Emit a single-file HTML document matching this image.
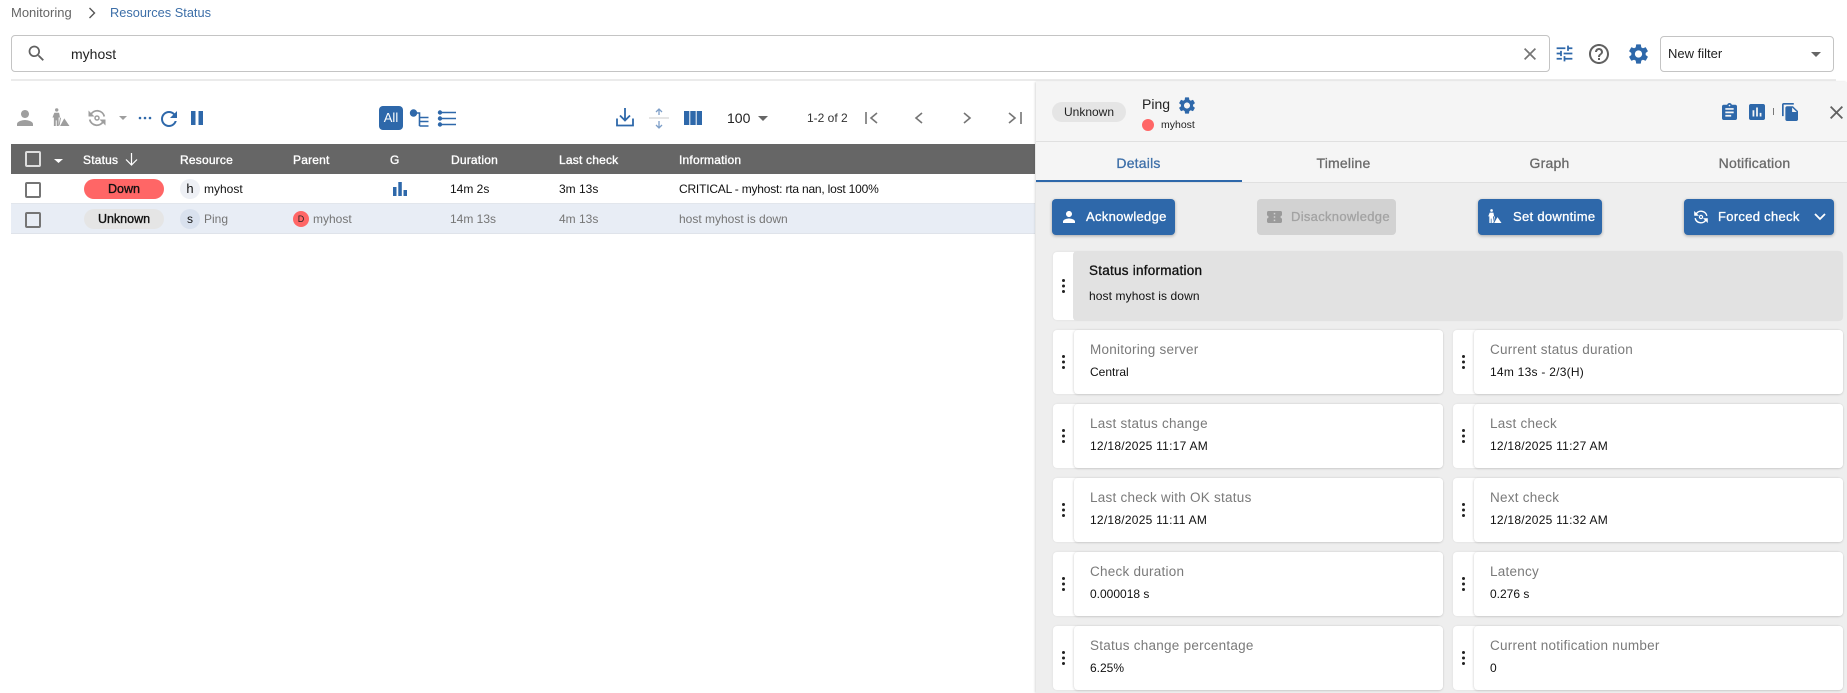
<!DOCTYPE html>
<html lang="en"><head><meta charset="utf-8"><title>Resources Status</title>
<style>
html,body{margin:0;padding:0;background:#fff;width:1847px;height:693px;overflow:hidden}
body{position:relative;font-family:"Liberation Sans",sans-serif;color:#111}
.a,.t{position:absolute}
.t{white-space:nowrap;line-height:20px;font-size:12px}
svg{position:absolute;display:block;overflow:visible}
.hd{color:#fff;font-size:12px;letter-spacing:.2px;-webkit-text-stroke:.35px #fff;top:150px}
.r1{top:179px;color:#111}
.r2{top:209px;color:#757575}
.cb{position:absolute;left:25px;width:12px;height:12px;border:2px solid #757575;border-radius:2px;background:#fff}
.chip{position:absolute;left:84px;width:80px;height:20px;border-radius:10px;text-align:center;line-height:20px;font-size:12.5px;-webkit-text-stroke:.35px #111;color:#111}
.tab{position:absolute;top:153px;width:205px;text-align:center;font-size:14px;letter-spacing:.2px;line-height:20px;-webkit-text-stroke:.3px #6a6a6a;color:#6a6a6a}
.btn{position:absolute;top:199px;height:36px;border-radius:4px;background:#2e68aa;box-shadow:0 1px 3px rgba(0,0,0,.3)}
.btxt{color:#fff;font-size:13px;letter-spacing:.3px;-webkit-text-stroke:.3px #fff;top:207px}
.card{position:absolute;width:390px;height:64px;background:#fff;border-radius:4px;box-shadow:0 0 2px rgba(0,0,0,.08)}
.in{position:absolute;left:21px;top:0;right:0;bottom:0;border-radius:4px;box-shadow:-1px 0 2px rgba(0,0,0,.08),0 1px 2px rgba(0,0,0,.09);background:#fff}
.lb{position:absolute;left:37px;top:10px;line-height:20px;font-size:13.5px;letter-spacing:.25px;color:#7a7a7a;white-space:nowrap}
.vl{position:absolute;left:37px;top:32px;line-height:20px;font-size:12px;color:#111;white-space:nowrap}
.vl.d{letter-spacing:.25px}
.dots{position:absolute;left:9px;top:25px;width:3px;height:3px;border-radius:50%;background:#222;box-shadow:0 5.5px 0 #222,0 11px 0 #222}
</style></head><body>
<svg width="0" height="0" style="position:absolute"><defs>
<symbol id="person" viewBox="4 4 16 16"><path d="M12 12c2.21 0 4-1.79 4-4s-1.79-4-4-4-4 1.79-4 4 1.79 4 4 4zm0 2c-2.67 0-8 1.34-8 4v2h16v-2c0-2.66-5.33-4-8-4z"/></symbol>
<symbol id="dt" viewBox="0 0 19 19"><circle cx="5.5" cy="2" r="1.8"/><path d="M3 5h5l1 5H7.500v9H5.500v-6H4.500v6H2.500v-9L1 10zM9 10l1 .5-1.500 8H7.500z"/><path d="M9 19l4.500-8 5.500 8z"/></symbol>
<symbol id="sync" viewBox="0 0 20 20"><path d="M3.800 6.500A7.300 7.300 0 0 1 17.300 8.500M16.200 13.500A7.300 7.300 0 0 1 2.700 11.500" fill="none" stroke="currentColor" stroke-width="1.800"/><path d="M1.500 2.500v6h6zM18.500 17.500v-6h-6z" fill="currentColor"/><circle cx="10" cy="10" r="2" fill="none" stroke="currentColor" stroke-width="1.500"/></symbol>
<symbol id="gear" viewBox="2.500 2 19 20"><path d="M19.140 12.940c.04-.3.06-.61.06-.94 0-.32-.02-.64-.07-.94l2.030-1.580c.18-.14.23-.41.12-.61l-1.920-3.320c-.12-.22-.37-.29-.59-.22l-2.390.96c-.5-.38-1.030-.7-1.620-.94l-.36-2.540c-.04-.24-.24-.41-.48-.41h-3.840c-.24 0-.43.17-.47.41l-.36 2.540c-.59.24-1.130.57-1.620.94l-2.390-.96c-.22-.08-.47 0-.59.22L2.740 8.870c-.12.21-.08.47.12.61l2.030 1.580c-.05.3-.09.63-.09.94s.02.64.07.94l-2.030 1.580c-.18.14-.23.41-.12.61l1.920 3.320c.12.22.37.29.59.22l2.390-.96c.5.38 1.030.7 1.620.94l.36 2.540c.05.24.24.41.48.41h3.840c.24 0 .44-.17.47-.41l.36-2.540c.59-.24 1.130-.56 1.620-.94l2.390.96c.22.08.47 0 .59-.22l1.920-3.320c.12-.22.07-.47-.12-.61l-2.010-1.580zM12 15.600c-1.980 0-3.600-1.620-3.600-3.600s1.620-3.600 3.600-3.600 3.600 1.620 3.600 3.600-1.620 3.600-3.600 3.600z"/></symbol>
<symbol id="close" viewBox="5 5 14 14"><path d="M19 6.410L17.590 5 12 10.590 6.410 5 5 6.410 10.590 12 5 17.590 6.410 19 12 13.410 17.590 19 19 17.590 13.410 12z"/></symbol>
</defs></svg>

<!-- breadcrumb -->
<div class="t" style="left:11px;top:3px;font-size:13px;color:#666">Monitoring</div>
<svg style="left:88px;top:7px" width="8" height="12" viewBox="0 0 8 12"><path d="M1.500 1l5 5-5 5" fill="none" stroke="#555" stroke-width="1.400"/></svg>
<div class="t" style="left:110px;top:3px;font-size:12.800px;color:#3d6fa8">Resources Status</div>

<!-- search -->
<div class="a" style="left:11px;top:35px;width:1537px;height:35px;border:1px solid #c4c4c4;border-radius:4px"></div>
<svg style="left:26px;top:43px" width="21" height="21" viewBox="0 0 24 24" fill="#616161"><path d="M15.500 14h-.79l-.28-.27C15.410 12.590 16 11.110 16 9.500 16 5.910 13.090 3 9.500 3S3 5.910 3 9.500 5.910 16 9.500 16c1.610 0 3.090-.59 4.230-1.570l.27.28v.79l5 4.990L20.490 19l-4.990-5zm-6 0C7.010 14 5 11.990 5 9.500S7.010 5 9.500 5 14 7.010 14 9.500 11.990 14 9.500 14z"/></svg>
<div class="t" style="left:71px;top:44px;font-size:14px;color:#222">myhost</div>
<svg style="left:1524px;top:48px" width="12" height="12" fill="#757575"><use href="#close"/></svg>
<svg style="left:1554px;top:43px" width="21" height="21" viewBox="0 0 24 24" fill="#2e68aa"><path d="M3 17v2h6v-2H3zM3 5v2h10V5H3zm10 16v-2h8v-2h-8v-2h-2v6h2zM7 9v2H3v2h4v2h2V9H7zm14 4v-2H11v2h10zm-6-4h2V7h4V5h-4V3h-2v6z"/></svg>
<svg style="left:1587px;top:42px" width="24" height="24" viewBox="0 0 24 24" fill="#616161"><path d="M11 18h2v-2h-2v2zm1-16C6.480 2 2 6.480 2 12s4.480 10 10 10 10-4.480 10-10S17.520 2 12 2zm0 18c-4.410 0-8-3.590-8-8s3.590-8 8-8 8 3.590 8 8-3.590 8-8 8zm0-14c-2.210 0-4 1.790-4 4h2c0-1.100.9-2 2-2s2 .9 2 2c0 2-3 1.750-3 5h2c0-2.250 3-2.500 3-5 0-2.210-1.790-4-4-4z"/></svg>
<svg style="left:1629px;top:44px" width="19" height="20" fill="#2e68aa"><use href="#gear"/></svg>
<div class="a" style="left:1660px;top:36px;width:172px;height:34px;border:1px solid #c4c4c4;border-radius:4px"></div>
<div class="t" style="left:1668px;top:44px;font-size:13px;color:#222">New filter</div>
<svg style="left:1811px;top:52px" width="10" height="5" fill="#666"><path d="M0 0h10L5 5z"/></svg>
<div class="a" style="left:11px;top:79px;width:1825px;height:2px;background:#ebebeb"></div>

<!-- toolbar -->
<svg style="left:17px;top:110px" width="16" height="16" fill="#9e9e9e"><use href="#person"/></svg>
<svg style="left:51px;top:108px" width="19" height="18" fill="#9e9e9e"><use href="#dt"/></svg>
<svg style="left:87px;top:108px;color:#9e9e9e" width="20" height="20"><use href="#sync"/></svg>
<svg style="left:119px;top:116px" width="8" height="4" fill="#9e9e9e"><path d="M0 0h8L4 4z"/></svg>
<svg style="left:138px;top:116px" width="14" height="4" fill="#2e68aa"><circle cx="2" cy="2" r="1.300"/><circle cx="7" cy="2" r="1.300"/><circle cx="12" cy="2" r="1.300"/></svg>
<svg style="left:161px;top:111px" width="16" height="16" viewBox="4 4 16 16" fill="#2e68aa"><path d="M17.650 6.350C16.200 4.900 14.210 4 12 4c-4.420 0-7.990 3.580-7.990 8s3.570 8 7.990 8c3.730 0 6.840-2.550 7.730-6h-2.080c-.82 2.330-3.040 4-5.650 4-3.310 0-6-2.690-6-6s2.690-6 6-6c1.660 0 3.140.69 4.220 1.780L13 11h7V4l-2.350 2.350z"/></svg>
<svg style="left:191px;top:111px" width="12" height="14" fill="#2e68aa"><path d="M0 0h4.500v14H0zM7.500 0H12v14H7.500z"/></svg>
<div class="a" style="left:379px;top:106px;width:24px;height:24px;border-radius:4px;background:#2e68aa;color:#fff;font-size:13px;text-align:center;line-height:24px">All</div>
<svg style="left:409px;top:108px" width="20" height="20" fill="none" stroke="#2e68aa" stroke-width="1.600"><circle cx="4.500" cy="5" r="3.700" fill="#2e68aa" stroke="none"/><path d="M4.500 5h6v13M10.500 9.500h9M10.500 13.500h9M10.500 18h9"/></svg>
<svg style="left:438px;top:110px" width="18" height="17" fill="#2e68aa" stroke="#2e68aa" stroke-width="1.600"><circle cx="2" cy="2.500" r="1.400"/><circle cx="2" cy="8.500" r="1.400"/><circle cx="2" cy="14.500" r="1.400"/><path d="M2 2.500h16M2 8.500h16M2 14.500h16"/></svg>
<svg style="left:616px;top:108px" width="18" height="19" fill="none" stroke="#2e68aa" stroke-width="1.800"><path d="M9 0v12M4 7.500L9 12.500 14 7.500M1 10.500v7h16v-7"/></svg>
<svg style="left:649px;top:108px" width="20" height="21" fill="none" stroke="#7e9fc8" stroke-width="1.300"><path d="M10 1v6M7 4l3-3 3 3M10 13v7M7 17l3 3 3-3"/><path d="M0 10h20" stroke="#d5d5d5"/></svg>
<svg style="left:684px;top:111px" width="18" height="14" fill="#2e68aa"><path d="M0 0h5.300v14H0zM6.300 0h5.400v14H6.300zM12.700 0H18v14h-5.300z"/></svg>
<div class="t" style="left:727px;top:108px;font-size:14px;color:#222">100</div>
<svg style="left:758px;top:116px" width="10" height="5" fill="#666"><path d="M0 0h10L5 5z"/></svg>
<div class="t" style="left:807px;top:108px;font-size:12px;color:#333">1-2 of 2</div>
<svg style="left:865px;top:112px" width="158" height="12" fill="none" stroke="#757575" stroke-width="1.600"><path d="M1 0v12M12 1L6 6l6 5M57 1l-6 5 6 5M99 1l6 5-6 5M144 1l6 5-6 5M156 0v12"/></svg>

<!-- table -->
<div class="a" style="left:11px;top:144px;width:1024px;height:30px;background:#666"></div>
<div class="cb" style="top:151px;background:transparent;border-color:#ddd"></div>
<svg style="left:54px;top:159px" width="9" height="4" fill="#fff"><path d="M0 0h9L4.500 4z"/></svg>
<div class="t hd" style="left:83px">Status</div>
<svg style="left:125px;top:152px" width="13" height="14" fill="none" stroke="#fff" stroke-width="1.200"><path d="M6.500 1v12M1 7.500l5.500 5.500L12 7.500"/></svg>
<div class="t hd" style="left:180px">Resource</div>
<div class="t hd" style="left:293px">Parent</div>
<div class="t hd" style="left:390px">G</div>
<div class="t hd" style="left:451px">Duration</div>
<div class="t hd" style="left:559px">Last check</div>
<div class="t hd" style="left:679px">Information</div>

<div class="a" style="left:11px;top:203px;width:1024px;height:1px;background:#e2e6ec"></div>
<div class="a" style="left:11px;top:204px;width:1024px;height:29px;background:#e8edf5;border-bottom:1px solid #dfe3ea"></div>
<div class="cb" style="top:182px"></div>
<div class="cb" style="top:212px;background:transparent"></div>
<div class="chip" style="top:179px;background:#ff6666">Down</div>
<div class="chip" style="top:209px;background:#e5e5e5">Unknown</div>
<div class="a" style="left:180px;top:179px;width:20px;height:20px;border-radius:50%;background:#eef0f5;text-align:center;line-height:20px;font-size:13px">h</div>
<div class="a" style="left:180px;top:209px;width:20px;height:20px;border-radius:50%;background:#d9e1ee;text-align:center;line-height:20px;font-size:12px">s</div>
<div class="t r1" style="left:204px">myhost</div>
<div class="t r2" style="left:204px">Ping</div>
<div class="a" style="left:293px;top:211px;width:16px;height:16px;border-radius:50%;background:#ff6666;text-align:center;line-height:16px;font-size:9px;color:#222">D</div>
<div class="t r2" style="left:313px">myhost</div>
<svg style="left:393px;top:182px" width="14" height="14" fill="#2e68aa"><path d="M0 5h3.500v9H0zM5.300 0h3.500v14H5.300zM10.500 8H14v6h-3.500z"/></svg>
<div class="t r1" style="left:450px">14m 2s</div>
<div class="t r1" style="left:559px">3m 13s</div>
<div class="t r1" style="left:679px;letter-spacing:-.2px">CRITICAL - myhost: rta nan, lost 100%</div>
<div class="t r2" style="left:450px">14m 13s</div>
<div class="t r2" style="left:559px">4m 13s</div>
<div class="t r2" style="left:679px">host myhost is down</div>

<!-- panel -->
<div class="a" style="left:1036px;top:82px;width:811px;height:611px;background:#eee;box-shadow:-1px 0 2px rgba(0,0,0,.15)"></div>
<div class="a" style="left:1036px;top:82px;width:811px;height:100px;background:#f5f5f5"></div>
<div class="a" style="left:1036px;top:141px;width:811px;height:1px;background:#e0e0e0"></div>
<div class="a" style="left:1036px;top:182px;width:811px;height:1px;background:#e0e0e0"></div>
<div class="a" style="left:1052px;top:102px;width:74px;height:20px;border-radius:10px;background:#e5e5e5;text-align:center;line-height:20px;font-size:12px;color:#222">Unknown</div>
<div class="t" style="left:1142px;top:94px;font-size:14px;color:#222">Ping</div>
<svg style="left:1179px;top:97px" width="16" height="17" fill="#2e68aa"><use href="#gear"/></svg>
<div class="a" style="left:1142px;top:119px;width:12px;height:12px;border-radius:50%;background:#ff6666"></div>
<div class="t" style="left:1161px;top:115px;font-size:10.500px;color:#222">myhost</div>
<svg style="left:1722px;top:103px" width="15" height="17" viewBox="3 1 18 20" preserveAspectRatio="none" fill="#2e68aa"><path d="M19 3h-4.180C14.400 1.840 13.300 1 12 1c-1.300 0-2.400.84-2.820 2H5c-1.100 0-2 .9-2 2v14c0 1.100.9 2 2 2h14c1.100 0 2-.9 2-2V5c0-1.100-.9-2-2-2zm-7 0c.55 0 1 .45 1 1s-.45 1-1 1-1-.45-1-1 .45-1 1-1zm2 14H7v-2h7v2zm3-4H7v-2h10v2zm0-4H7V7h10v2z"/></svg>
<svg style="left:1749px;top:104px" width="16" height="16" viewBox="3 3 18 18" fill="#2e68aa"><path d="M19 3H5c-1.100 0-2 .9-2 2v14c0 1.100.9 2 2 2h14c1.100 0 2-.9 2-2V5c0-1.100-.9-2-2-2zM9 17H7v-7h2v7zm4 0h-2V7h2v10zm4 0h-2v-4h2v4z"/></svg>
<div class="a" style="left:1773px;top:108px;width:1px;height:7px;background:#777"></div>
<svg style="left:1782px;top:103px" width="16" height="18" viewBox="2 1 19 22" preserveAspectRatio="none" fill="#2e68aa"><path d="M16 1H4c-1.100 0-2 .9-2 2v14h2V3h12V1zm-1 4l6 6v10c0 1.100-.9 2-2 2H7.990C6.890 23 6 22.100 6 21l.01-14c0-1.100.89-2 1.990-2h7zm-1 7h5.500L14 6.500V12z"/></svg>
<svg style="left:1830px;top:106px" width="13" height="13" fill="#616161"><use href="#close"/></svg>

<div class="tab" style="left:1036px;color:#3d6fa8;-webkit-text-stroke:.3px #3d6fa8">Details</div>
<div class="tab" style="left:1241px">Timeline</div>
<div class="tab" style="left:1447px">Graph</div>
<div class="tab" style="left:1652px">Notification</div>
<div class="a" style="left:1036px;top:180px;width:206px;height:2px;background:#2e68aa"></div>

<!-- buttons -->
<div class="btn" style="left:1052px;width:123px"></div>
<svg style="left:1063px;top:211px" width="12" height="12" fill="#fff"><use href="#person"/></svg>
<div class="t btxt" style="left:1086px">Acknowledge</div>
<div class="btn" style="left:1257px;width:139px;background:#d2d2d2;box-shadow:none"></div>
<svg style="left:1267px;top:211px" width="15" height="12" viewBox="2 4 20 16" preserveAspectRatio="none" fill="#9a9a9a"><path d="M22 10V6c0-1.110-.9-2-2-2H4c-1.100 0-1.990.89-1.990 2v4c1.100 0 1.990.9 1.990 2s-.89 2-2 2v4c0 1.100.9 2 2 2h16c1.100 0 2-.9 2-2v-4c-1.100 0-2-.9-2-2s.9-2 2-2zm-9 7.500h-2v-2h2v2zm0-4.500h-2v-2h2v2zm0-4.500h-2v-2h2v2z"/></svg>
<div class="t btxt" style="left:1291px;color:#a3a3a3;-webkit-text-stroke:.3px #a3a3a3">Disacknowledge</div>
<div class="btn" style="left:1478px;width:124px"></div>
<svg style="left:1487px;top:209px" width="15" height="14" fill="#fff"><use href="#dt"/></svg>
<div class="t btxt" style="left:1513px">Set downtime</div>
<div class="btn" style="left:1684px;width:150px"></div>
<svg style="left:1693px;top:209px;color:#fff" width="16" height="16"><use href="#sync"/></svg>
<div class="t btxt" style="left:1718px">Forced check</div>
<svg style="left:1814px;top:213px" width="12" height="8" fill="none" stroke="#fff" stroke-width="1.800"><path d="M1 1l5 5 5-5"/></svg>

<!-- status info -->
<div class="card" style="left:1053px;top:252px;width:789px;height:68px"></div>
<div class="a" style="left:1073px;top:251px;width:770px;height:70px;background:#e2e2e2;border-radius:4px"></div>
<div class="dots" style="left:1062px;top:279px"></div>
<div class="t" style="left:1089px;top:261px;font-size:13.500px;letter-spacing:.25px;-webkit-text-stroke:.3px #111;color:#111">Status information</div>
<div class="t" style="left:1089px;top:286px;font-size:12px;letter-spacing:.1px;color:#111">host myhost is down</div>

<!-- cards -->
<div class="card" style="left:1053px;top:330px"><div class="dots"></div><div class="in"></div><div class="lb">Monitoring server</div><div class="vl">Central</div></div>
<div class="card" style="left:1453px;top:330px"><div class="dots"></div><div class="in"></div><div class="lb">Current status duration</div><div class="vl d">14m 13s - 2/3(H)</div></div>
<div class="card" style="left:1053px;top:404px"><div class="dots"></div><div class="in"></div><div class="lb">Last status change</div><div class="vl d">12/18/2025 11:17 AM</div></div>
<div class="card" style="left:1453px;top:404px"><div class="dots"></div><div class="in"></div><div class="lb">Last check</div><div class="vl d">12/18/2025 11:27 AM</div></div>
<div class="card" style="left:1053px;top:478px"><div class="dots"></div><div class="in"></div><div class="lb">Last check with OK status</div><div class="vl d">12/18/2025 11:11 AM</div></div>
<div class="card" style="left:1453px;top:478px"><div class="dots"></div><div class="in"></div><div class="lb">Next check</div><div class="vl d">12/18/2025 11:32 AM</div></div>
<div class="card" style="left:1053px;top:552px"><div class="dots"></div><div class="in"></div><div class="lb">Check duration</div><div class="vl">0.000018 s</div></div>
<div class="card" style="left:1453px;top:552px"><div class="dots"></div><div class="in"></div><div class="lb">Latency</div><div class="vl">0.276 s</div></div>
<div class="card" style="left:1053px;top:626px"><div class="dots"></div><div class="in"></div><div class="lb">Status change percentage</div><div class="vl">6.25%</div></div>
<div class="card" style="left:1453px;top:626px"><div class="dots"></div><div class="in"></div><div class="lb">Current notification number</div><div class="vl">0</div></div>
</body></html>
